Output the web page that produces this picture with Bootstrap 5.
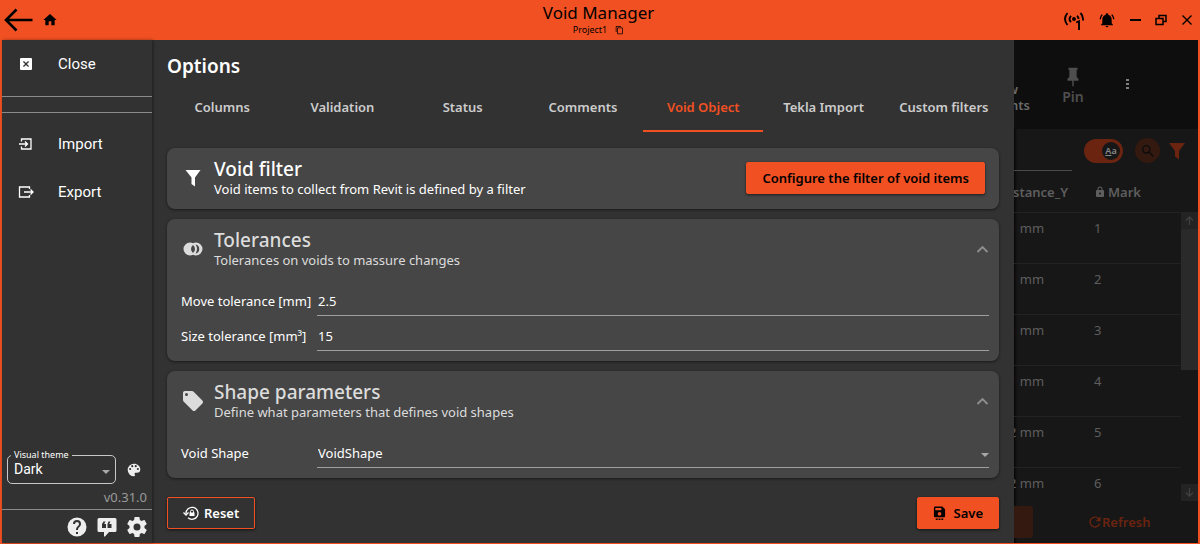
<!DOCTYPE html>
<html lang="en">
<head>
<meta charset="utf-8">
<meta name="viewport" content="width=device-width, initial-scale=1">
<title>Void Manager</title>
<link href="https://cdn.jsdelivr.net/npm/bootstrap@5.3.0/dist/css/bootstrap.min.css" rel="stylesheet">
<style>
:root { --accent: #f15022; --panel: #323232; --surface: #464646; --soft: #dcdcdc; }
body { font-family: "Noto Sans", sans-serif; font-size: 13px; line-height: 18px; color: #fff; background: var(--panel); }
svg { display: block; flex: none; fill: currentColor; }
button, a { color: inherit; }
.plain { background: none; border: 0; padding: 0; color: inherit; }
.frame { border: 2px solid var(--accent); border-top: 0; }
.titlebar { background: var(--accent); color: #000; height: 40px; margin: 0 -2px; padding: 0 7px 0 4px; }
.titlebar h1 { font-size: 17px; line-height: 20px; font-weight: 400; margin: 0; }
.project { font-size: 9px; line-height: 14px; }
.side-part { flex: 1 0 0; }
.window-tools { gap: 14px; }
.sidebar { width: 150px; flex: none; box-shadow: 1px 0 3px rgba(0,0,0,.4); }
.side-item { font: 15px/48px Roboto, sans-serif; height: 48px; padding-left: 15px; gap: 23px; text-decoration: none; }
.rule { border-top: 1px solid #8a8a8a; }
.double-rule { height: 17px; border: 1px solid #8a8a8a; border-width: 1px 0; margin: 8px 0 7px; }
.theme-row { padding-left: 5px; gap: 11px; color: #eee; }
.theme-box { position: relative; border: 1px solid #c8c8c8; border-radius: 5px; height: 29px; width: 109px; color: #fff; }
.theme-box label { position: absolute; top: -7px; left: 3px; padding: 0 3px; background: var(--panel); font-size: 9px; line-height: 12px; white-space: nowrap; }
.theme-box select, .line-field select { appearance: none; background: none; border: 0; color: inherit; outline: 0; width: 100%; }
.theme-box select { font: 14px/27px Roboto, sans-serif; padding: 0 6px; }
.caret { position: absolute; right: 0; top: 50%; border: 4px solid transparent; border-top-color: #a8a8a8; border-bottom: 0; pointer-events: none; }
.theme-box .caret { right: 5px; }
.version { color: #9a9a9a; line-height: 18px; padding: 4px 5px 3px; }
.side-foot { gap: 8px; padding: 5px 4px 4px; color: #eee; }
.options { padding: 12px 15px 14px; }
.options h2 { font-size: 19px; line-height: 28px; font-weight: 600; margin: 0 0 12px; }
.tabs { margin: 0 -5px 16px; }
.tabs button { color: #ccc; font-weight: 600; height: 40px; padding: 0 0 9px; border: 0; border-bottom: 2px solid transparent; background: none; white-space: nowrap; }
.tabs .active { color: var(--accent); border-color: var(--accent); }
.panels { gap: 10px; }
.panel { background: var(--surface); border-radius: 8px; box-shadow: 0 1px 3px rgba(0,0,0,.5); padding: 0 10px 10px 14px; }
.panel-head { height: 61px; gap: 9px; padding-bottom: 2px; }
.panel-head h3 { font-size: 19px; line-height: 22px; font-weight: 500; margin: 0; }
.panel-head p { margin: 0; line-height: 18px; }
.soft { color: var(--soft); }
.grey { color: #8f8f8f; }
.field-row { padding-top: 6px; }
.field-row + .field-row { padding-top: 5px; }
.field-row > label { width: 136px; flex: none; white-space: nowrap; }
.line-field { position: relative; border-bottom: 1px solid #a0a0a0; }
.line-field input { background: none; border: 0; outline: 0; color: inherit; width: 100%; }
.line-field input, .line-field select { height: 29px; padding: 0 1px; line-height: 18px; }
.btn-app { --bs-btn-font-size: 13px; --bs-btn-font-weight: 600; --bs-btn-line-height: 18px; --bs-btn-border-radius: 2px; --bs-btn-padding-y: 6px; --bs-btn-padding-x: 15px; box-shadow: 0 1px 3px rgba(0,0,0,.6); }
.btn-fill { --bs-btn-bg: var(--accent); --bs-btn-color: #000; --bs-btn-border-color: var(--accent); }
.btn-line { --bs-btn-color: #fff; --bs-btn-border-color: var(--accent); }
.backdrop { width: 184px; background: #171717; color: #5e5e5e; overflow: hidden; box-shadow: inset 3px 0 3px -2px #000; }
.toolbar { background: #0e0e0e; height: 89px; font-weight: 600; color: #4e4e4e; }
.clip { width: 16px; overflow: hidden; color: #6a6a6a; line-height: 16px; }
.tool-pin { margin-left: 32px; }
.dots { margin-left: 42px; color: #808080; }
.filters { height: 43px; color: #6a2410; }
.searchline { border-bottom: 1px solid #4a4a4a; width: 58px; height: 40px; }
.toggle { width: 39px; height: 24px; border-radius: 12px; background: #6a2410; padding: 3px; margin: 0 12px; }
.toggle span { width: 18px; height: 18px; border-radius: 50%; background: #171717; font-size: 9px; font-weight: 600; color: #8a8a8a; }
.round { width: 25px; height: 25px; border-radius: 50%; background: #33190f; color: #0c0c0c; }
.grid-table { width: 187px; flex: none; table-layout: fixed; border-collapse: collapse; }
.grid-table th { height: 40px; font-weight: 600; padding: 0 0 0 19px; border-bottom: 1px solid #222; white-space: nowrap; }
.grid-table td { height: 51px; padding: 6px 0 0 15px; vertical-align: top; border-bottom: 1px solid #222; }
.grid-table th + th, .grid-table td + td { padding-left: 6px; }
.grid-table tr:last-child td { height: 34px; border: 0; }
.c-distance { width: 94px; }
.lock-head { gap: 2px; }
.scroll { width: 17px; color: #404040; margin-top: 40px; }
.scroll-end { background: #232323; height: 17px; }
.thumb { background: #2a2a2a; height: 141px; }
.footer-bar { height: 42px; padding-top: 5px; color: #6a2410; }
.ghost-btn { width: 19px; height: 32px; background: #33190f; border-radius: 0 3px 3px 0; }
.refresh { margin: 7px 0 0 55px; font-weight: 600; }
</style>
</head>
<body>
<div class="frame d-flex flex-column min-vh-100">
  <header class="titlebar d-flex align-items-center">
    <div class="side-part d-flex align-items-center gap-2">
      <button class="plain" aria-label="Back"><svg width="30" height="24" viewBox="0 0 30 24" stroke="#000" stroke-width="2.6"><path d="M28.500 12H2M12.500 1.500L2 12l10.500 10.500" fill="none"/></svg></button>
      <button class="plain" aria-label="Home"><svg width="16" height="16" viewBox="0 0 24 24"><path d="M10,20V14H14V20H19V12H22L12,3L2,12H5V20H10Z"/></svg></button>
    </div>
    <div class="text-center">
      <h1>Void Manager</h1>
      <div class="project d-flex justify-content-center align-items-center gap-2"><span>Project1</span><svg width="9" height="10" viewBox="0 0 24 24"><path d="M19,21H8V7H19M19,5H8A2,2 0 0,0 6,7V21A2,2 0 0,0 8,23H19A2,2 0 0,0 21,21V7A2,2 0 0,0 19,5M16,1H4A2,2 0 0,0 2,3V17H4V3H16V1Z"/></svg></div>
    </div>
    <div class="side-part window-tools d-flex align-items-center justify-content-end">
      <button class="plain" aria-label="Connection"><svg width="22" height="20" viewBox="0 0 22 20" stroke="#000" stroke-width="1.900"><g fill="none"><path d="M4.500 3Q-.5 9 4.500 15M8 5.800Q5 9 8 12.200M17.500 3Q20.500 6 20 10.500M14 5.800Q15.500 7 15.500 9"/><path d="M13.200 12.500L16 11.300V20"/></g><circle cx="11" cy="9" r="1"/></svg></button>
      <button class="plain" aria-label="Notifications"><svg width="16" height="16" viewBox="0 0 24 24"><path d="M21,19V20H3V19L5,17V11C5,7.900 7.030,5.170 10,4.290V4A2,2 0 0,1 14,4V4.290C16.970,5.170 19,7.900 19,11V17L21,19M14,21A2,2 0 0,1 10,21M19.750,3.190L18.330,4.610C20.040,6.300 21,8.600 21,11H23C23,8.070 21.840,5.250 19.750,3.190M1,11H3C3,8.600 3.960,6.300 5.670,4.610L4.250,3.190C2.160,5.250 1,8.070 1,11Z"/></svg></button>
      <button class="plain" aria-label="Minimize"><svg width="12" height="12" viewBox="0 0 12 12"><path d="M1 5h11v2H1z"/></svg></button>
      <button class="plain" aria-label="Restore"><svg width="12" height="12" viewBox="0 0 12 12"><path d="M1 4.500h7v6H1zM4 4.500V1.500h7v6H8" fill="none" stroke="#000" stroke-width="1.500"/></svg></button>
      <button class="plain" aria-label="Close window"><svg width="12" height="12" viewBox="0 0 12 12"><path d="M1.500 1.500l9 9M10.500 1.500l-9 9" stroke="#000" stroke-width="1.400"/></svg></button>
    </div>
  </header>

  <div class="d-flex flex-grow-1">
    <nav class="sidebar d-flex flex-column">
      <a href="#" class="side-item d-flex align-items-center"><svg width="18" height="18" viewBox="0 0 18 18"><path fill-rule="evenodd" d="M4 3h10a1 1 0 0 1 1 1v10a1 1 0 0 1-1 1H4a1 1 0 0 1-1-1V4a1 1 0 0 1 1-1zM6 6.900L8.100 9 6 11.100l.9.900L9 9.900l2.100 2.100.9-.9L9.900 9 12 6.900l-.9-.9L9 8.100 6.900 6z"/></svg><span>Close</span></a>
      <div class="double-rule"></div>
      <a href="#" class="side-item d-flex align-items-center"><svg width="18" height="18" viewBox="0 0 18 18"><path d="M4.500 6.500V4h9.500v10H4.500v-2.500M2 9h8M8 6.500L10.500 9 8 11.500" fill="none" stroke="currentColor" stroke-width="1.300"/></svg><span>Import</span></a>
      <a href="#" class="side-item d-flex align-items-center"><svg width="18" height="18" viewBox="0 0 18 18"><path d="M12.500 6V4H2.500v10h10v-2M7 9h9M13.500 6.500L16 9l-2.500 2.500" fill="none" stroke="currentColor" stroke-width="1.300"/></svg><span>Export</span></a>
      <div class="theme-row mt-auto d-flex align-items-center">
        <div class="theme-box"><label for="theme">Visual theme</label><select id="theme"><option>Dark</option></select><span class="caret"></span></div>
        <button class="plain" aria-label="Colours"><svg width="14" height="14" viewBox="2 2 20 20"><path d="M17.500,12A1.500,1.500 0 1,1 19,10.500A1.500,1.500 0 0,1 17.500,12M14.500,8A1.500,1.500 0 1,1 16,6.500A1.500,1.500 0 0,1 14.500,8M9.500,8A1.500,1.500 0 1,1 11,6.500A1.500,1.500 0 0,1 9.500,8M6.500,12A1.500,1.500 0 1,1 8,10.500A1.500,1.500 0 0,1 6.500,12M12,3A9,9 0 0,0 12,21A1.500,1.500 0 0,0 13.500,19.500C13.500,19.110 13.350,18.760 13.110,18.500C12.880,18.230 12.730,17.880 12.730,17.500A1.500,1.500 0 0,1 14.230,16H16A5,5 0 0,0 21,11C21,6.580 16.970,3 12,3Z" fill-rule="evenodd"/></svg></button>
      </div>
      <div class="version text-end">v0.31.0</div>
      <div class="rule side-foot d-flex justify-content-end align-items-center">
        <button class="plain" aria-label="Help"><svg width="22" height="24" viewBox="1 0 22 24"><path d="M15.070,11.250L14.170,12.170C13.450,12.890 13,13.500 13,15H11V14.500C11,13.390 11.450,12.390 12.170,11.670L13.410,10.410C13.780,10.050 14,9.550 14,9A2,2 0 0,0 10,9H8A4,4 0 0,1 16,9C16,9.880 15.640,10.670 15.070,11.250M13,19H11V17H13M12,2.500A9.500,9.500 0 1,0 12,21.500A9.500,9.500 0 0,0 12,2.500Z" fill-rule="evenodd"/></svg></button>
        <button class="plain" aria-label="Feedback"><svg width="22" height="24" viewBox="1 0 22 24"><path fill-rule="evenodd" d="M4 3h16a1.500 1.500 0 0 1 1.500 1.500v11A1.500 1.500 0 0 1 20 17h-6l-4 4.500H9V17H4a1.500 1.500 0 0 1-1.500-1.500v-11A1.500 1.500 0 0 1 4 3zM10.500 6.500h-2L7 9v4h4V9H9.200zM15.500 6.500h-2L12.500 9v4h4V9h-2.300z"/></svg></button>
        <button class="plain" aria-label="Settings"><svg width="22" height="24" viewBox="1 0 22 24"><path d="M12,15.500A3.500,3.500 0 0,1 8.500,12A3.500,3.500 0 0,1 12,8.500A3.500,3.500 0 0,1 15.500,12A3.500,3.500 0 0,1 12,15.500M19.430,12.970C19.470,12.650 19.500,12.330 19.500,12C19.500,11.670 19.470,11.340 19.430,11L21.540,9.370C21.730,9.220 21.780,8.950 21.660,8.730L19.660,5.270C19.540,5.050 19.270,4.960 19.050,5.050L16.560,6.050C16.040,5.660 15.500,5.320 14.870,5.070L14.500,2.420C14.460,2.180 14.250,2 14,2H10C9.750,2 9.540,2.180 9.500,2.420L9.130,5.070C8.500,5.320 7.960,5.660 7.440,6.050L4.950,5.050C4.730,4.960 4.460,5.050 4.340,5.270L2.340,8.730C2.210,8.950 2.270,9.220 2.460,9.370L4.570,11C4.530,11.340 4.500,11.670 4.500,12C4.500,12.330 4.530,12.650 4.570,12.970L2.460,14.630C2.270,14.780 2.210,15.050 2.340,15.270L4.340,18.730C4.460,18.950 4.730,19.030 4.950,18.950L7.440,17.940C7.960,18.340 8.500,18.680 9.130,18.930L9.500,21.580C9.540,21.820 9.750,22 10,22H14C14.250,22 14.460,21.820 14.500,21.580L14.870,18.930C15.500,18.670 16.040,18.340 16.560,17.940L19.050,18.950C19.270,19.030 19.540,18.950 19.660,18.730L21.660,15.270C21.780,15.050 21.730,14.780 21.540,14.630L19.430,12.970Z"/></svg></button>
      </div>
    </nav>

    <main class="options flex-grow-1 d-flex flex-column">
      <h2>Options</h2>
      <div class="tabs d-flex" role="tablist">
        <button class="col" role="tab">Columns</button><button class="col" role="tab">Validation</button><button class="col" role="tab">Status</button><button class="col" role="tab">Comments</button><button class="col active" role="tab" aria-selected="true">Void Object</button><button class="col" role="tab">Tekla Import</button><button class="col" role="tab">Custom filters</button>
      </div>
      <div class="panels d-flex flex-column">
        <section class="panel pb-0">
          <div class="panel-head d-flex align-items-center">
            <svg width="24" height="24" viewBox="0 0 24 24"><path d="M4.500 4H19.500L14 11.500V20.500L10.500 18V11.500Z"/></svg>
            <div class="flex-grow-1"><h3>Void filter</h3><p>Void items to collect from Revit is defined by a filter</p></div>
            <button class="btn btn-app btn-fill me-1">Configure the filter of void items</button>
          </div>
        </section>
        <section class="panel">
          <div class="panel-head d-flex align-items-center soft">
            <svg width="24" height="24" viewBox="0 0 24 24"><path fill-rule="evenodd" d="M9 5.500A6.500 6.500 0 0 0 9 18.500Q10.700 18.500 12 17.700Q13.300 18.500 15 18.500A6.500 6.500 0 0 0 15 5.500Q13.300 5.500 12 6.300Q10.700 5.500 9 5.500zM12 8Q14 9.500 14 12T12 16Q10 14.500 10 12T12 8zM14.600 7.500a4.600 4.600 0 0 1 0 9Q16 14.500 16 12T14.600 7.500z"/></svg>
            <div class="flex-grow-1"><h3>Tolerances</h3><p>Tolerances on voids to massure changes</p></div>
            <button class="plain grey" aria-label="Collapse Tolerances"><svg width="13" height="14" viewBox="0 0 13 14"><path d="M1.500 10l5-5 5 5" fill="none" stroke="currentColor" stroke-width="1.800"/></svg></button>
          </div>
          <div class="field-row d-flex align-items-center"><label for="move">Move tolerance [mm]</label><div class="line-field flex-grow-1"><input id="move" value="2.5"></div></div>
          <div class="field-row d-flex align-items-center"><label for="size">Size tolerance [mm³]</label><div class="line-field flex-grow-1"><input id="size" value="15"></div></div>
        </section>
        <section class="panel">
          <div class="panel-head d-flex align-items-center soft">
            <svg width="24" height="24" viewBox="0 0 24 24"><path d="M5.500,7A1.500,1.500 0 1,1 7,5.500A1.500,1.500 0 0,1 5.500,7M21.410,11.580L12.410,2.580C12.050,2.220 11.550,2 11,2H4C2.890,2 2,2.890 2,4V11C2,11.550 2.220,12.050 2.590,12.410L11.580,21.410C11.950,21.770 12.450,22 13,22C13.550,22 14.050,21.770 14.410,21.410L21.410,14.410C21.780,14.050 22,13.550 22,13C22,12.440 21.770,11.940 21.410,11.580Z" fill-rule="evenodd"/></svg>
            <div class="flex-grow-1"><h3>Shape parameters</h3><p>Define what parameters that defines void shapes</p></div>
            <button class="plain grey" aria-label="Collapse Shape parameters"><svg width="13" height="14" viewBox="0 0 13 14"><path d="M1.500 10l5-5 5 5" fill="none" stroke="currentColor" stroke-width="1.800"/></svg></button>
          </div>
          <div class="field-row d-flex align-items-center"><label for="shape">Void Shape</label><div class="line-field flex-grow-1"><select id="shape"><option>VoidShape</option></select><span class="caret"></span></div></div>
        </section>
      </div>
      <div class="d-flex justify-content-between mt-auto">
        <button class="btn btn-app btn-line d-flex align-items-center gap-1"><svg width="17" height="16" viewBox="0 0 17 16"><path d="M3 8.500A6 6 0 1 1 5 12.800M.5 7.500L3 10l2.500-2.500" fill="none" stroke="currentColor" stroke-width="1.300"/><path d="M6.500 7.500h5v3.500h-5z"/><path d="M7.500 8V6.500a1.500 1.500 0 0 1 3 0V8" fill="none" stroke="currentColor"/></svg><span>Reset</span></button>
        <button class="btn btn-app btn-fill d-flex align-items-center gap-2"><svg width="13" height="16" viewBox="0 0 14 16"><path fill-rule="evenodd" d="M2.500 1H10l3 3v7.500a1 1 0 0 1-1 1H2a1 1 0 0 1-1-1v-9A1.500 1.500 0 0 1 2.500 1zM2.500 2.500V5H9V2.500zM7 7a2 2 0 1 0 .1 4A2 2 0 0 0 7 7z"/><path d="M3 14h2v1.500H3zM6 14h2v1.500H6zM9 14h2v1.500H9z"/></svg><span>Save</span></button>
      </div>
    </main>

    <aside class="backdrop d-flex flex-column flex-shrink-0">
      <div class="toolbar d-flex align-items-center">
        <div class="clip d-flex flex-column align-items-end mt-4"><span class="me-2 pe-1">w</span><span>nts</span></div>
        <div class="tool-pin text-center fs-6 lh-1"><svg class="mx-auto" width="22" height="22" viewBox="0 0 24 24"><path d="M16,12V4H17V2H7V4H8V12L6,14V16H11.200V22H12.800V16H18V14L16,12Z"/></svg><small>Pin</small></div>
        <svg class="dots" width="3" height="16" viewBox="18 0 3 16"><path d="M18 2h3v2h-3zM18 6h3v2h-3zM18 10h3v2h-3z"/></svg>
      </div>
      <div class="filters d-flex align-items-center">
        <div class="searchline flex-shrink-0"></div>
        <div class="toggle d-flex align-items-center justify-content-end flex-shrink-0"><span class="text-center"><u>A</u>a</span></div>
        <div class="round d-flex align-items-center justify-content-center flex-shrink-0"><svg width="16" height="16" viewBox="0 0 24 24"><path d="M9.500,3A6.500,6.500 0 0,1 16,9.500C16,11.110 15.410,12.590 14.440,13.730L14.710,14H15.500L20.500,19L19,20.500L14,15.500V14.710L13.730,14.440C12.590,15.410 11.110,16 9.500,16A6.500,6.500 0 0,1 3,9.500A6.500,6.500 0 0,1 9.500,3M9.500,5A4.500,4.500 0 1,0 9.500,14A4.500,4.500 0 0,0 9.500,5Z"/></svg></div>
        <svg class="ms-2" width="18" height="20" viewBox="3 3 18 18"><path d="M4 4H20L14 12V20.500L10 17.500V12Z"/></svg>
      </div>
      <div class="d-flex justify-content-end flex-grow-1">
        <table class="grid-table">
          <colgroup><col class="c-distance"><col></colgroup>
          <thead><tr><th>stance_Y</th><th><span class="lock-head d-flex align-items-center"><svg width="12" height="12" viewBox="0 0 24 24"><path fill-rule="evenodd" d="M12,17A2,2 0 1,0 10,15A2,2 0 0,0 12,17M18,8A2,2 0 0,1 20,10V20A2,2 0 0,1 18,22H6A2,2 0 0,1 4,20V10A2,2 0 0,1 6,8H7V6A5,5 0 0,1 17,6V8H18M12,3A3,3 0 0,0 9,6V8H15V6A3,3 0 0,0 12,3Z"/></svg>Mark</span></th></tr></thead>
          <tbody>
            <tr><td>1 mm</td><td>1</td></tr><tr><td>1 mm</td><td>2</td></tr><tr><td>1 mm</td><td>3</td></tr><tr><td>1 mm</td><td>4</td></tr><tr><td>2 mm</td><td>5</td></tr><tr><td>2 mm</td><td>6</td></tr>
          </tbody>
        </table>
        <div class="scroll d-flex flex-column flex-shrink-0"><div class="scroll-end"><svg width="17" height="17" viewBox="0 0 17 17"><path d="M8.500 13V5M5 8.500L8.500 5 12 8.500" fill="none" stroke="currentColor" stroke-width="1.300"/></svg></div><div class="thumb"></div><div class="scroll-end mt-auto"><svg width="17" height="17" viewBox="0 0 17 17"><path d="M8.500 4v8M5 8.500L8.500 12 12 8.500" fill="none" stroke="currentColor" stroke-width="1.300"/></svg></div></div>
      </div>
      <div class="footer-bar d-flex align-items-start">
        <div class="ghost-btn"></div>
        <button class="plain refresh d-flex align-items-center"><svg width="14" height="14" viewBox="2 2 20 20"><path d="M17.650,6.350A8,8 0 1,0 19.730,14H17.650A6,6 0 1,1 16.220,7.780L13,11H20V4L17.650,6.350Z"/></svg>Refresh</button>
      </div>
    </aside>
  </div>
</div>
<script src="https://cdn.jsdelivr.net/npm/bootstrap@5.3.0/dist/js/bootstrap.bundle.min.js"></script>
</body>
</html>
